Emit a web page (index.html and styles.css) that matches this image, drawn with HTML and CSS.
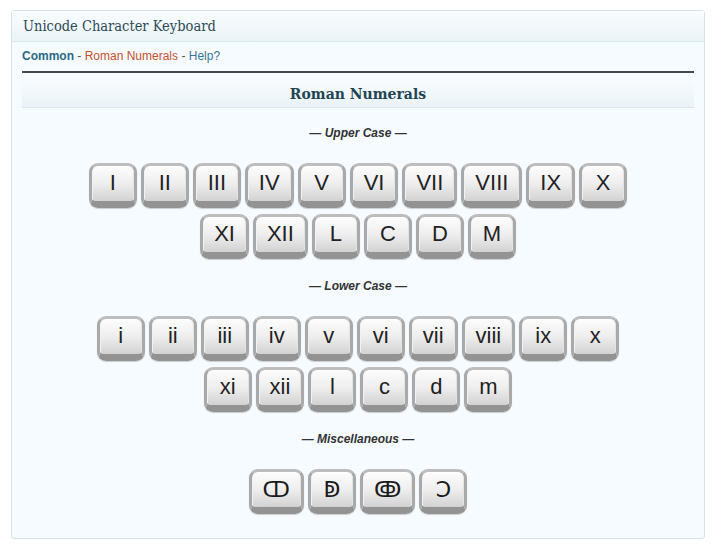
FILE: index.html
```html
<!DOCTYPE html>
<html>
<head>
<meta charset="utf-8">
<link rel="stylesheet" href="styles.css">
</head>
<body>
<div class="panel">
  <div class="panel-head">Unicode Character Keyboard</div>
  <div class="panel-body">
    <div class="nav"><a class="nav-common">Common</a> - <a class="nav-active">Roman Numerals</a> - <a class="nav-help">Help?</a></div>
    <div class="band">Roman Numerals</div>

    <div class="label">— Upper Case —</div>
    <div class="keys">
      <div class="row">
        <span class="key">I</span><span class="key">II</span><span class="key">III</span><span class="key">IV</span><span class="key">V</span><span class="key">VI</span><span class="key">VII</span><span class="key">VIII</span><span class="key">IX</span><span class="key">X</span>
      </div>
      <div class="row">
        <span class="key">XI</span><span class="key">XII</span><span class="key">L</span><span class="key">C</span><span class="key">D</span><span class="key">M</span>
      </div>
    </div>

    <div class="label">— Lower Case —</div>
    <div class="keys">
      <div class="row">
        <span class="key">i</span><span class="key">ii</span><span class="key">iii</span><span class="key">iv</span><span class="key">v</span><span class="key">vi</span><span class="key">vii</span><span class="key">viii</span><span class="key">ix</span><span class="key">x</span>
      </div>
      <div class="row">
        <span class="key">xi</span><span class="key">xii</span><span class="key">l</span><span class="key">c</span><span class="key">d</span><span class="key">m</span>
      </div>
    </div>

    <div class="label">— Miscellaneous —</div>
    <div class="keys">
      <div class="row">
        <span class="key misc">ↀ</span><span class="key misc">ↁ</span><span class="key misc">ↂ</span><span class="key misc">Ↄ</span>
      </div>
    </div>
  </div>
</div>
</body>
</html>
```
FILE: styles.css
```css
html, body {
  margin: 0;
  padding: 0;
  background: #ffffff;
}

.panel {
  margin: 10px 0 0 11px;
  width: 694px;
  box-sizing: border-box;
  border: 1px solid #d6e3ea;
  border-radius: 3px;
  background: #f5fbfe;
}

.panel-head {
  height: 30px;
  line-height: 30px;
  padding-left: 11px;
  font-family: "DejaVu Serif Condensed", "DejaVu Serif", Georgia, serif;
  font-size: 14.5px;
  color: #2c4a57;
  background: linear-gradient(#f8fcfe, #ecf4f8);
  border-bottom: 1px solid #dce8ee;
}

.panel-body {
  padding: 6px 10px 24px 10px;
}

.nav {
  font-family: "Liberation Sans", Arial, sans-serif;
  font-size: 12px;
  line-height: 16px;
  color: #555;
  padding-bottom: 7px;
  border-bottom: 2px solid #4a4a4a;
}

.nav a { text-decoration: none; }
.nav-common { color: #2b6a86; font-weight: bold; }
.nav-active { color: #c4522f; }
.nav-help { color: #3a7596; }

.band {
  margin-top: 8px;
  height: 26px;
  line-height: 26px;
  text-align: center;
  font-family: "DejaVu Serif", Georgia, serif;
  font-weight: bold;
  font-size: 14px;
  color: #1f4552;
  background: linear-gradient(#f7fbfd, #eaf2f7);
  border-bottom: 1px solid #dbe5eb;
}

.label {
  text-align: center;
  font-family: "Liberation Sans", Arial, sans-serif;
  font-size: 12px;
  line-height: 16px;
  font-weight: bold;
  font-style: italic;
  color: #333;
  margin-top: 19px;
}

.band + .label { margin-top: 17px; }

.keys {
  margin-top: 22px;
  display: flex;
  flex-direction: column;
  gap: 6px;
}

.row {
  display: flex;
  justify-content: center;
  gap: 4px;
}

.key {
  display: inline-flex;
  align-items: center;
  justify-content: center;
  box-sizing: border-box;
  height: 45px;
  min-width: 48px;
  padding: 0 11px 1px;
  font-family: "Liberation Sans", Arial, sans-serif;
  font-size: 22px;
  color: #222;
  background: linear-gradient(#fdfdfd 0%, #eeeeee 50%, #d2d2d2 100%);
  border: 3px solid #a9a9a9;
  border-top-color: #bdbdbd;
  border-bottom: 7px solid #939393;
  border-radius: 9px;
  box-shadow: inset 0 1px 0 #ffffff, inset 1px 0 0 #f2f2f2, inset -1px 0 0 #e4e4e4, 0 1px 1px rgba(0,0,0,0.18);
}

.key.misc {
  font-family: "DejaVu Sans", sans-serif;
  font-size: 22px;
  color: #1a1a1a;
  min-width: 48px;
}
```
